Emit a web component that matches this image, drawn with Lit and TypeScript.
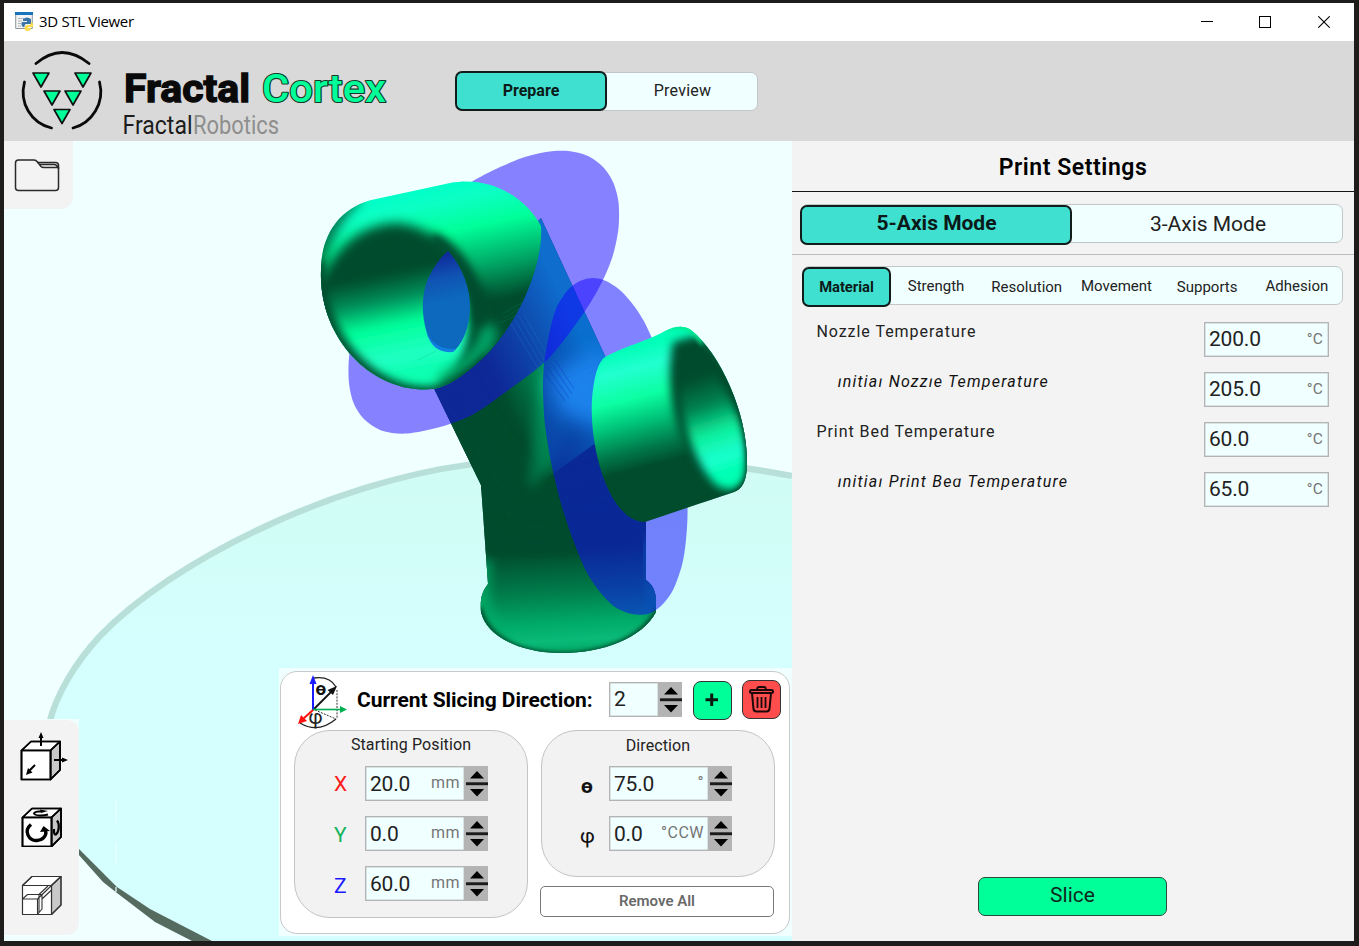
import { LitElement, html, svg, css } from "lit";
import { customElement, property } from "lit/decorators.js";
import { classMap } from "lit/directives/class-map.js";

const DARK = "#004c2d";

/** Closed Catmull-Rom curve through the given points. */
function smooth(points: number[][]): string {
  const n = points.length;
  const at = (i: number) => points[(i + n) % n];
  let d = `M${points[0][0]} ${points[0][1]}`;
  for (let i = 0; i < n; i++) {
    const [a, b, c, e] = [at(i - 1), at(i), at(i + 1), at(i + 2)];
    d += `C${b[0] + (c[0] - a[0]) / 7} ${b[1] + (c[1] - a[1]) / 7} ${c[0] - (e[0] - b[0]) / 7} ${c[1] - (e[1] - b[1]) / 7} ${c[0]} ${c[1]}`;
  }
  return d + "Z";
}

const PLANE_1 = smooth([[473, 181], [496, 169], [522, 158], [546, 152], [568, 151], [588, 156], [603, 167], [613, 182], [618.5, 202], [618.5, 228], [613, 255], [602, 282], [583, 314], [548, 359], [503, 394], [472, 415], [440, 427], [407, 433.5], [383, 431], [365, 420], [354, 404], [349, 383], [349, 358], [354, 335], [375, 290], [420, 225], [452, 195]]);
const PLANE_2 = smooth([[592, 278], [578, 282], [567, 291], [556, 309], [549, 335], [544, 365], [543, 390], [545, 425], [551, 462], [560, 500], [572, 537], [586, 571], [600, 592], [615, 607], [632, 614], [648, 614], [661, 606], [673, 590], [682, 565], [686, 540], [687.5, 508], [684, 460], [675, 400], [651, 336], [637, 310], [621, 291], [606, 281]]);

@customElement("num-field")
class NumField extends LitElement {
  @property() value = "";
  @property() unit = "";
  @property({ type: Boolean }) spin = false;
  static styles = css`
    :host { display: flex; height: 35px; box-sizing: border-box; font-family: Roboto, sans-serif; }
    .box { flex: 1; display: flex; justify-content: space-between; border: 1px solid #b4b4b4; background: #f0ffff;
      box-shadow: inset 0 0 0 0.5px #c4c8c8; padding: 0 5px 0 4px; box-sizing: border-box; }
    .value { font-size: 21px; line-height: 33px; color: #222; letter-spacing: -0.2px; }
    .raised { line-height: 34px; }
    .unit { font-size: 15.5px; line-height: 33px; color: #757575; letter-spacing: 0.2px; }
    .spin { width: 23px; height: 35px; background: #b4b4b4; }
    .spin svg { display: block; }
    .mid { font-size: 16px; padding-right: 0; margin-right: -1px; line-height: 31px; letter-spacing: 0.5px; }
  `;
  render() {
    return html`<div class="box"><span class=${classMap({ value: true, raised: this.spin && this.unit !== "" })}>${this.value}</span><span class=${classMap({ unit: true, mid: this.spin })}>${this.unit}</span></div>
      ${this.spin ? html`<div class="spin"><svg width="23" height="35" viewBox="0 0 23 35">
        <path d="M12 5 19 12.5H5Z M12 30.5 5 23H19Z" fill="#000"/><path d="M1 16.3H23V19.2H1Z" fill="#1a1a1a"/></svg></div>` : ""}`;
  }
}

@customElement("model-scene")
class ModelScene extends LitElement {
  static styles = css`:host { display: block; } svg { display: block; }`;
  render() {
    return html`<svg width="788" height="800" viewBox="4 141 788 800">
      <defs>
        <linearGradient id="bed" x1="0" y1="460" x2="0" y2="660" gradientUnits="userSpaceOnUse"><stop offset="0" stop-color="#cffcf3"/><stop offset="1" stop-color="#d5ffff"/></linearGradient>
        <linearGradient id="arm" x1="455" y1="420" x2="590" y2="352" gradientUnits="userSpaceOnUse">
          <stop offset="0" stop-color=${DARK}/><stop offset=".35" stop-color=${DARK}/><stop offset=".68" stop-color="#008c56"/><stop offset="1" stop-color="#00d69a"/></linearGradient>
        <linearGradient id="base" x1="560" y1="550" x2="566" y2="655" gradientUnits="userSpaceOnUse">
          <stop offset="0" stop-color=${DARK}/><stop offset=".4" stop-color="#007d4b"/><stop offset=".7" stop-color="#00ab69"/><stop offset=".86" stop-color="#0aba77"/><stop offset="1" stop-color="#00a565"/></linearGradient>
        <linearGradient id="c1" x1="452" y1="182" x2="478" y2="305" gradientUnits="userSpaceOnUse">
          <stop offset="0" stop-color="#00ffc8"/><stop offset=".14" stop-color="#0cffc4"/><stop offset=".38" stop-color="#00ff99"/><stop offset=".68" stop-color="#00ac68"/><stop offset=".9" stop-color="#006b40"/><stop offset="1" stop-color=${DARK}/></linearGradient>
        <linearGradient id="in1" x1="390" y1="262" x2="412" y2="372" gradientUnits="userSpaceOnUse">
          <stop offset="0" stop-color=${DARK}/><stop offset=".1" stop-color=${DARK}/><stop offset=".33" stop-color="#00905a"/><stop offset=".56" stop-color="#00ff99"/><stop offset=".85" stop-color="#20ffc4"/><stop offset="1" stop-color="#0cffb0"/></linearGradient>
        <linearGradient id="eye" x1="440" y1="255" x2="450" y2="300" gradientUnits="userSpaceOnUse"><stop offset="0" stop-color="#0e2a9c"/><stop offset=".5" stop-color="#1053b2"/><stop offset="1" stop-color="#0c69bd"/></linearGradient>
        <linearGradient id="c2" x1="620" y1="350" x2="650" y2="466" gradientUnits="userSpaceOnUse">
          <stop offset="0" stop-color="#00ffb8"/><stop offset=".18" stop-color="#22ffd0"/><stop offset=".42" stop-color="#0cffa2"/><stop offset=".62" stop-color="#00c479"/><stop offset=".85" stop-color="#007748"/><stop offset="1" stop-color=${DARK}/></linearGradient>
        <linearGradient id="in2" x1="692" y1="378" x2="724" y2="472" gradientUnits="userSpaceOnUse">
          <stop offset="0" stop-color=${DARK}/><stop offset=".3" stop-color="#00804f"/><stop offset=".6" stop-color="#0cf09c"/><stop offset=".85" stop-color="#1cffd0"/><stop offset="1" stop-color="#00ffb4"/></linearGradient>
        <filter id="b2" x="-40%" y="-40%" width="180%" height="180%"><feGaussianBlur stdDeviation="2.2"/></filter>
        <filter id="b4" x="-40%" y="-40%" width="180%" height="180%"><feGaussianBlur stdDeviation="4"/></filter>
        <filter id="b6" x="-60%" y="-60%" width="220%" height="220%"><feGaussianBlur stdDeviation="6"/></filter>
        <filter id="b9" x="-50%" y="-50%" width="200%" height="200%"><feGaussianBlur stdDeviation="10"/></filter>
        <clipPath id="bodyC"><path d="M425 370 481 485 488 584C482 592 480 598 481 612C486 634 515 652 558 653C600 654 642 639 656 612V598C655 590 652 584 646 580V470L606 358 541 218 460 300Z"/></clipPath>
        <clipPath id="cyl1"><path d="M321 270C321 235 340 206 376 199L450 183C492 175 527 199 541 226C544 262 520 322 484 357C465 375 446 388 432 389C375 395 318 340 321 270Z"/></clipPath>
        <clipPath id="cyl2"><path d="M605 357C622 347 650 340 665 331C675 326 684 325 691 330C721 354 748 415 747 463C747 479 743 489 734 492L645 522C610 522 589 450 592 399C594 376 598 362 605 357Z"/></clipPath>
      </defs>
      <rect x="4" y="141" width="788" height="800" fill="#f0ffff"/>
      <path d="M792 477C688 457 572 452 470 466C330 485 172 563 100 640C75 667 54 698 48 725C40 775 55 822 80 851L103 876 117 889 152 913 205 941H792Z" fill="url(#bed)"/>
      <path d="M792 476C688 456 572 451 470 464.500C330 483 172 561 100 636C75 663 56 695 49 724" fill="none" stroke="#b8e0d9" stroke-width="6.300"/>
      <path d="M78 848 103 873 117 887 150 909 212 941H192L155 922 117 893 103 882 78 854Z" fill="#566b60"/>
      <path d="M116 799V823M116 842V865M116 887V892" stroke="#e9ffff" stroke-width="1.2"/>

      <g clip-path="url(#bodyC)">
        <path d="M400 200H670V670H400Z" fill=${DARK}/>
        <path d="M530 490 400 490 400 200 620 200 680 420 600 440Z" fill="url(#arm)"/>
        <path d="M400 400 455 380 515 470 545 520 480 530Z" fill=${DARK} filter="url(#b9)"/>
        <path d="M540 366 529 490 557 460 570 425Z" fill="#00a868" opacity=".5" filter="url(#b6)"/>
        <path d="M548 376 604 345 620 430 560 415Z" fill="#28ffd8" filter="url(#b9)"/>
        <path d="M525 510 580 485 680 455V560H525Z" fill=${DARK} filter="url(#b9)"/>
        <path d="M470 545Q565 562 660 530V660H470Z" fill="url(#base)"/>
        <path d="M470 535Q565 558 660 518" fill="none" stroke=${DARK} stroke-width="22" filter="url(#b6)"/>
        <path d="M482 560C474 600 482 622 500 640" fill="none" stroke="#00ad69" stroke-width="20" opacity=".85" filter="url(#b6)"/>
        <path d="M648 540Q662 590 650 620" fill="none" stroke="#00a070" stroke-width="16" opacity=".7" filter="url(#b6)"/>
        <path d="M479 608C486 636 515 654 558 655C600 656 642 641 658 610" fill="none" stroke=${DARK} stroke-width="6" filter="url(#b2)"/>
      </g>
      <path d=${PLANE_1} fill="#1c04ff" fill-opacity=".5"/>
      <g stroke-width=".8" opacity=".45" fill="none">
        <path d="M511 324 541 373M515 320 546 372M519 316 549 368M523 313 551 361" stroke="#1d73d6"/>
        <path d="M547 367 569 398M551 363 572 394M545 373 565 401M555 360 574 389" stroke="#064487"/>
        <path d="M550 374 600 350M555 384 602 360M558 392 597 369" stroke="#39a0f0" opacity=".4"/>
      </g>

      <g clip-path="url(#cyl1)">
        <rect x="300" y="160" width="260" height="250" fill="url(#c1)"/>
        <path d="M462 282 505 306 560 275V410H430Z" fill=${DARK} filter="url(#b9)"/>
        <path d="M350 196Q324 222 314 262V300" fill="none" stroke="#005c38" stroke-width="22" stroke-linecap="round" opacity=".85" filter="url(#b6)"/>
        <path d="M318 300C324 256 354 225 396 223C436 226 465 258 484 305C486 345 455 372 425 389C375 395 318 350 318 300Z" fill=${DARK} filter="url(#b6)"/>
        <path d="M318 290 350 262 436 245C455 262 468 290 469 312C470 340 464 362 440 396H380L325 350Z" fill="url(#in1)" filter="url(#b4)"/>
        <path d="M489 332Q484 356 446 380" fill="none" stroke="#00a967" stroke-width="16" stroke-linecap="round" filter="url(#b6)"/>
        <path d="M436 240C463 256 478 288 479 318" fill="none" stroke=${DARK} stroke-width="12" stroke-linecap="round" filter="url(#b4)"/>
        <path d="M317 262C316 340 374 398 434 393C452 389 476 373 490 358" fill="none" stroke=${DARK} stroke-width="14" filter="url(#b4)"/>
        <path d="M502 314 525 301M504 318 522 307M500 323 519 314M418 360 436 351" fill="none" stroke="#00a368" stroke-width=".7" opacity=".3"/>
        <path d="M448 251C462 266 470 288 470 306C470 328 462 344 454 351C440 354 430 344 426 330C420 308 423 286 431 273C437 262 442 256 448 251Z" fill="url(#eye)"/>
        <path d="M426 331Q434 350 456 349L453 352Q432 354 426 331Z" fill="#117fe0"/>
      </g>

      <path d=${PLANE_2} fill="#1206ff" fill-opacity=".5"/>

      <g clip-path="url(#cyl2)">
        <rect x="580" y="315" width="180" height="220" fill="url(#c2)"/>
        <path d="M673 342C665 380 672 430 697 466L730 495 760 480 750 390 702 334Z" fill=${DARK} filter="url(#b4)"/>
        <path d="M680 372 706 362C732 395 752 435 745 475C740 492 726 492 715 484C694 462 678 415 680 372Z" fill="url(#in2)" filter="url(#b4)"/>
        <path d="M664 327Q682 321 695 331L705 343" fill="none" stroke="#00e78e" stroke-width="8" filter="url(#b2)"/>
        <path d="M704 339C730 366 750 420 750 465Q750 490 732 496L705 504" fill="none" stroke=${DARK} stroke-width="7" filter="url(#b2)"/>
      </g>
    </svg>`;
  }
}

const cube = svg`<path d="M1.5 10.5 11 1.5H40L30.5 10.5Z" fill="#fff"/><path d="M30.5 10.5 40 1.5V30L30.5 39.5Z" fill="#c9c9c9"/><path d="M1.5 10.5H30.5V39.5H1.5Z" fill="#fff"/>`;
const cubeEdges = svg`<path d="M1.5 10.5 11 1.5H40V30L30.5 39.5H1.5ZH30.5V39.5M30.5 10.5 40 1.5"/>`;

@customElement("app-root")
class AppRoot extends LitElement {
  static styles = css`
    :host { display: block; width: 1359px; height: 946px; box-sizing: border-box; background: #1f1d1c; padding: 3px 5px 5px 4px;
      font-family: Roboto, sans-serif; color: #111; overflow: hidden; }
    * { box-sizing: border-box; }
    svg { display: block; }
    .title { height: 38px; background: #fff; display: flex; align-items: center; padding: 0 24px 0 11px; }
    .title .name { font: 15px/20px "Open Sans", sans-serif; color: #000; margin: 0 auto 2px 6px; letter-spacing: -0.32px; }
    .wins { display: flex; gap: 46px; }
    .wins .max { margin-right: 1px; }
    .head { height: 100px; background: #d9d9d9; display: flex; }
    .seg { display: flex; background: #f0ffff; border: 1px solid #c2c6c6; border-radius: 7px; }
    .seg > span { display: block; text-align: center; white-space: nowrap; color: #222; }
    .seg > .on { background: #40e0d0; border: 2px solid #101d1b; border-radius: 7px; font-weight: 700; color: #0b1a18; }
    .views { width: 302px; height: 39px; margin: 31px 0 0 52px; font-size: 16px; line-height: 36px; }
    .views .on { width: 152px; height: 40px; margin: -2px 0 0 -2px; line-height: 36px; font-size: 16px; }
    .views .off { flex: 1; letter-spacing: 0.25px; padding-left: 1px; }
    .main { height: 800px; display: grid; grid-template-columns: 788px 562px; }
    .view { position: relative; }
    .open { position: absolute; left: 0; top: 0; width: 69px; height: 68px; background: #f3f3f3; border-radius: 0 0 12px 0; padding: 17px 0 0 10px; }
    .tools { position: absolute; left: 0; top: 578px; width: 75px; height: 217px; background: #f0ffff; }
    .toolbar { height: 215px; margin-top: 1px; background: #f3f3f3; border-radius: 0 12px 12px 0; padding: 11px 0 0 15px; display: flex; flex-direction: column; gap: 20px; }
    .toolbar .last { margin-top: 4px; }
    .card { position: absolute; left: 275px; top: 527px; width: 513px; height: 268px; background: #f0ffff; padding: 3px 2px 2px 1px; }
    .inner { height: 263px; width: 510px; background: #fff; border: 1.5px solid #c9c9c9; border-radius: 17px; padding: 0 8px 0 13px; }
    .top { display: flex; height: 57px; padding-left: 2px; }
    .top .lbl { font-weight: 700; font-size: 21px; line-height: 24px; margin: 16px 0 0 9px; width: 252px; flex: none; color: #000; letter-spacing: -0.05px; white-space: nowrap; }
    .top num-field { width: 73px; margin-top: 10px; }
    .btn { width: 39px; height: 39px; border: 1.5px solid #333; border-radius: 8px; margin-top: 9px; }
    .add { background: #00ff99; margin-left: 11px; }
    .del { background: #ff4d4d; margin: 8px 0 0 10px; }
    .cols { display: flex; gap: 13px; }
    .group { width: 234px; background: #f2f2f2; border: 1.5px solid #c3c3c3; border-radius: 36px; }
    .pos { height: 188px; margin-top: 1px; }
    .dir { height: 147px; margin-top: 1px; }
    .cap { text-align: center; font-size: 16px; line-height: 18px; margin-top: 5px; height: 30px; letter-spacing: 0.1px; color: #222; }
    .dir .cap { margin-top: 6px; height: 29px; }
    .axis { display: flex; height: 50px; }
    .axis b { font-weight: 400; font-size: 21px; line-height: 24px; margin-top: 6px; width: 31px; margin-left: 39px; }
    .axis:nth-child(3) b { margin-top: 7px; }
    .axis:nth-child(4) b { margin-top: 8px; }
    .dir .axis b { margin-left: 38px; width: 29px; color: #111; margin-top: 8px; }
    .dir .axis:nth-child(2) b { font-weight: 700; margin-top: 8px; margin-left: 39px; width: 28px; }
    .axis num-field { width: 123px; margin-top: 0; }
    .clear { width: 234px; height: 31px; margin: 9px 0 0 -1px; border: 1.5px solid #777; border-radius: 5px; text-align: center; font-weight: 600; font-size: 15px; line-height: 28px; color: #6a6a6a; background: #fff; }
    .panel { background: #f3f3f3; display: flex; flex-direction: column; }
    .ptitle { height: 51px; border-bottom: 1px solid #151515; text-align: center; font-weight: 600; font-size: 23px; line-height: 53px; color: #000; letter-spacing: 0.55px; }
    .moderow { height: 63px; border-bottom: 1px solid #bdbdbd; padding: 12px 0 0 9px; }
    .mode { width: 542px; height: 39px; font-size: 21px; line-height: 39px; }
    .mode .on { width: 272px; height: 40px; margin: 0 0 0 -2px; line-height: 32px; padding-left: 1px; }
    .mode .off { flex: 1; padding-left: 2px; }
    .tabs { width: 541px; height: 39px; margin: 11px 0 0 10px; font-size: 15px; line-height: 39px; }
    .tabs span { width: 90.3px; }
    .tabs .on { width: 89px; height: 40px; margin: 0 0 0 -1px; line-height: 36px; font-size: 14.8px; letter-spacing: -0.05px; }
    .tabs .low { line-height: 41px; padding-left: 1px; }
    .rows { margin: 17px 25px 0 24px; }
    .row { height: 50px; display: flex; justify-content: space-between; }
    .row num-field { width: 125px; }
    .row .lab { font-size: 16px; line-height: 20px; letter-spacing: 0.96px; color: #222; white-space: nowrap; padding-left: 0.4px; }
    .row .sub { padding-left: 21.4px; font-style: italic; color: #111; letter-spacing: 1.2px; }
    .cut { display: inline-block; clip-path: inset(6.4px -3px 0 -3px); }
    .slice { width: 189px; height: 39px; margin: auto 0 25px 186px; background: #00ff99; border: 1.5px solid #2b4a3e; border-radius: 7px; text-align: center; font-size: 21px; line-height: 34px; color: #10271d; }
    text { font-family: Roboto, sans-serif; }
    .outlined { paint-order: stroke; stroke-linejoin: round; }
  `;

  tri(x: number, y: number) {
    return svg`<path d=${`M${x - 8} ${y}H${x + 8}L${x} ${y + 14}Z`} fill="#00ff99" stroke="#111" stroke-width="1.7" stroke-linejoin="round"/>`;
  }

  sub(text: string) {
    return [...text].map((c) => ("Ild".includes(c) ? html`<span class="cut">${c}</span>` : c));
  }

  row(label: string, value: string, sub = false) {
    return html`<div class="row"><span class=${classMap({ lab: true, sub })}>${sub ? this.sub(label) : label}</span><num-field .value=${value} unit="°C"></num-field></div>`;
  }

  axis(name: string, color: string, value: string, unit: string) {
    return html`<div class="axis"><b style=${`color:${color}`}>${name}</b><num-field spin .value=${value} .unit=${unit}></num-field></div>`;
  }

  render() {
    return html`
    <div class="title">
      <svg width="18" height="20" viewBox="0 0 18 20"><path d="M.7 1H17.3V16.5H.7Z" fill="#f3f3f3" stroke="#8b979c"/><path d="M0 0H18V3H0Z" fill="#1874bd"/><path d="M3 6.5H9M3 9H7M3 11.5H6M3 14H6" stroke="#b0b5b8"/><path d="M8 7Q12 4 16 7V12H11Q9.500 12 9.500 15H8Q5.500 13 7 10H12V9H8Z" fill="#3b75a8"/><path d="M16 10Q19 11 18 15H13V16H16Q16 19 12.500 19Q9.500 19 9.500 16Q9.500 13.500 12 13H15Q16 13 16 10Z" fill="#ffdc4b"/></svg>
      <span class="name">3D STL Viewer</span>
      <div class="wins">
        <svg width="12" height="12" viewBox="0 0 12 12" shape-rendering="crispEdges"><path d="M0 5H12V6H0Z"/></svg>
        <svg class="max" width="12" height="12" viewBox="0 0 12 12" shape-rendering="crispEdges"><path d="M.5.5H11.500V11.500H.5Z" fill="none" stroke="#000"/></svg>
        <svg width="12" height="12" viewBox="0 0 12 12"><path d="M.3.3 11.700 11.700M11.700.3.3 11.700" stroke="#000" stroke-width="1.100"/></svg>
      </div>
    </div>
    <div class="head">
      <svg width="400" height="100" viewBox="4 41 400 100">
        <g fill="none" stroke="#0a0a0a" stroke-width="2.800" stroke-linecap="round"><path d="M36 63.500Q62 41.500 89 63.500"/><path d="M24.500 82C19 103 31 123 51.500 128"/><path d="M99.500 82C105 103 92 123 73 128"/></g>
        ${this.tri(41, 73)}${this.tri(83, 73)}${this.tri(52, 91)}${this.tri(73, 91)}${this.tri(62, 109.500)}
        <text x="124" y="102" font-size="39" font-weight="700" textLength="126" lengthAdjust="spacingAndGlyphs" fill="#0a0a0a" stroke="#0a0a0a" stroke-width="1.300">Fractal</text>
        <text class="outlined" x="262" y="102" font-size="39" font-weight="500" textLength="124" lengthAdjust="spacingAndGlyphs" fill="#00ff99" stroke="#16382a" stroke-width="2.200">Cortex</text>
        <text x="122.500" y="133.500" font-size="25" font-weight="400" textLength="70" lengthAdjust="spacingAndGlyphs" fill="#1c1c1c">Fractal</text>
        <text x="193" y="133.500" font-size="25" font-weight="400" textLength="86" lengthAdjust="spacingAndGlyphs" fill="#8e8e8e">Robotics</text>
      </svg>
      <div class="seg views"><span class="on">Prepare</span><span class="off">Preview</span></div>
    </div>
    <div class="main">
      <div class="view">
        <model-scene></model-scene>
        <div class="open"><svg width="46" height="34" viewBox="0 0 46 34" fill="none" stroke="#2a2a2a" stroke-width="1.500" stroke-linejoin="round"><path d="M4.500 2H20Q22 2 23.500 4L27 8.500Q28 9.500 30 9.500H44.500V29.500Q44.500 32.500 41.500 32.500H4.500Q1.500 32.500 1.500 29.500V5Q1.500 2 4.500 2Z"/><path d="M23 4.500H41.500Q44.500 4.500 44.500 7.500V11M26 6.500H40Q43 6.500 43.500 9.500"/></svg></div>
        <div class="tools"><div class="toolbar">
          <svg width="50" height="51" viewBox="-1 -9 50 51" fill="none" stroke="#000" stroke-width="1.700" stroke-linejoin="round">${cube}${cubeEdges}<path d="M21 6V-4M34 20H44M15 25 9 31" stroke-width="2"/><path d="M21-8 23.500-2H18.500ZM48 20 42 17.500V22.500ZM6 35 8 28 12.500 32.500Z" fill="#000" stroke="none"/></svg>
          <svg width="50" height="45" viewBox="-2 -5 50 45" fill="none" stroke="#000" stroke-width="1.700" stroke-linejoin="round">${cube}${cubeEdges}<path d="M10 17.500C2 24 8 34 16 33.500C23 33 27 27 23.500 22" stroke-width="3.400"/><path d="M19 25 22.500 19 29 24Z" fill="#000" stroke="none"/><path d="M27 7.500C22 9 14 9 13 6.500Q14 4 20 4.500" stroke-width="2"/><path d="M19 2.500 27 4 20 6Z" fill="#000" stroke="none"/><path d="M36 13.500C39 17 38 25 35 27.500Q32.500 28 33 22" stroke-width="2.200"/></svg>
          <svg class="last" width="50" height="44" viewBox="-2 -4 50 44" fill="none" stroke="#333" stroke-width="1.100" stroke-linejoin="round">${cube}${cubeEdges}<path d="M1.500 24 6.500 19.500H21V34L16.500 39.500M1.500 24H16.500V39.500M16.500 24 30.500 10.500M6.500 19.500H18L27 11M21 24 30.500 15M18 19.500V38"/></svg>
        </div></div>
        <div class="card"><div class="inner">
          <div class="top">
            <svg width="52" height="57" viewBox="296 671 52 57" fill="none"><path d="M314 677Q330 675 336 686M300 722Q318 733 336 718" stroke="#222" stroke-width="1.300"/><path d="M337 689V718M315 709 336 718" stroke="#333" stroke-dasharray="2 1.200"/><path d="M313 709 333 689" stroke="#111" stroke-width="1.800"/><path d="M337 685 327.500 689 333 694Z" fill="#111"/><path d="M313 709V681" stroke="#1a1aff" stroke-width="2"/><path d="M313 674 309.500 683H316.500Z" fill="#1a1aff"/><path d="M313 708.500H341" stroke="#00b050" stroke-width="1.600"/><path d="M347 708.500 340 705V712Z" fill="#00b050"/><path d="M313 709 303 718" stroke="#f11" stroke-width="2"/><path d="M298 723 301 714 307 720Z" fill="#f11"/><text x="315.500" y="694" font-size="19" font-weight="700" fill="#111">ө</text><text x="308.500" y="722.500" font-size="20" fill="#222">φ</text></svg>
            <span class="lbl">Current Slicing Direction:</span>
            <num-field spin value="2"></num-field>
            <div class="btn add"><svg width="36" height="36" viewBox="0 0 36 36"><path d="M11.500 17.700H24M17.700 11.500V24" stroke="#0a1a12" stroke-width="3"/></svg></div>
            <div class="btn del"><svg width="36" height="36" viewBox="0 0 36 36" fill="none" stroke="#1c0808" stroke-width="2"><path d="M9 12 10.500 28Q11 30.500 13.500 30.500H23.500Q26 30.500 26.500 28L28 12"/><rect x="7" y="9" width="23" height="3" rx="1.500"/><path d="M14 9Q14 6 16 6H21Q23 6 23 9M14.500 16V27M18.500 16V27M22.500 16V27" stroke-width="1.800"/></svg></div>
          </div>
          <div class="cols">
            <div class="group pos"><div class="cap">Starting Position</div>
              ${this.axis("X", "#ff1a1a", "20.0", "mm")}${this.axis("Y", "#12b35a", "0.0", "mm")}${this.axis("Z", "#1a1aff", "60.0", "mm")}
            </div>
            <div>
              <div class="group dir"><div class="cap">Direction</div>
                ${this.axis("ө", "#111", "75.0", "°")}${this.axis("φ", "#111", "0.0", "°CCW")}
              </div>
              <div class="clear">Remove All</div>
            </div>
          </div>
        </div></div>
      </div>
      <div class="panel">
        <div class="ptitle">Print Settings</div>
        <div class="moderow"><div class="seg mode"><span class="on">5-Axis Mode</span><span class="off">3-Axis Mode</span></div></div>
        <div class="seg tabs"><span class="on">Material</span><span>Strength</span><span class="low">Resolution</span><span>Movement</span><span class="low">Supports</span><span>Adhesion</span></div>
        <div class="rows">
          ${this.row("Nozzle Temperature", "200.0")}
          ${this.row("Initial Nozzle Temperature", "205.0", true)}
          ${this.row("Print Bed Temperature", "60.0")}
          ${this.row("Initial Print Bed Temperature", "65.0", true)}
        </div>
        <div class="slice">Slice</div>
      </div>
    </div>`;
  }
}
